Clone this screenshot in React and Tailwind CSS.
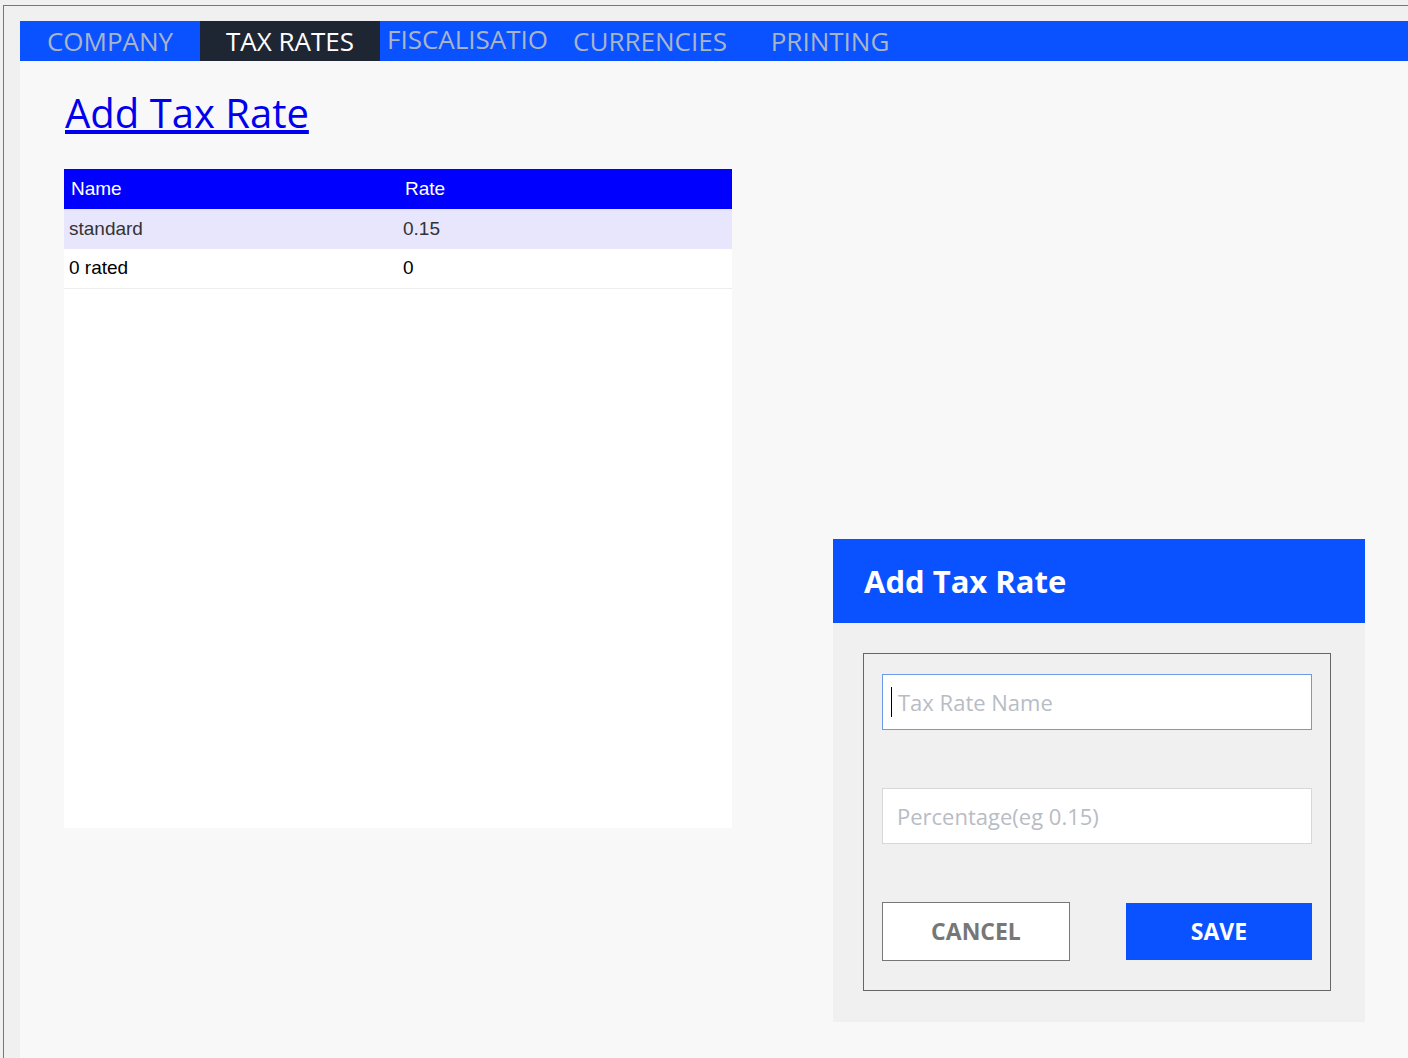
export default function App() {
  const tabs = ["COMPANY", "TAX RATES", "FISCALISATION", "CURRENCIES", "PRINTING"];
  const seg = { fontFamily: '"Open Sans", "Noto Sans", sans-serif' };
  const arial = { fontFamily: '"Liberation Sans", Arial, sans-serif' };
  return (
    <div className="w-[1408px] h-[1058px] bg-[#f0f0f0] pt-[5px] pl-[3px] overflow-hidden" style={seg}>
      <div className="h-full border-l border-t border-[#777] pt-[15px] pl-[16px]">
        <div className="h-full bg-[#f8f8f8] flex flex-col">
          <div className="h-[40px] bg-[#0a52ff] flex shrink-0">
            {tabs.map((t, i) => (
              <div
                key={t}
                className={
                  "w-[180px] h-[40px] overflow-hidden whitespace-nowrap flex items-center text-[26px] " +
                  (i === 1 ? "bg-[#1f2633] text-white justify-center" : i === 2 ? "text-[#a9b4c8] justify-start pl-[7px] pb-[3px]" : "text-[#a9b4c8] justify-center")
                }
              >
                {t === "FISCALISATION" ? "FISCALISATIO" : t}
              </div>
            ))}
          </div>
          <div className="relative flex-1">
            <a href="#" className="absolute left-[45px] top-[24px] text-[40px] leading-[56px] text-[#0000ee] underline">Add Tax Rate</a>
            <div className="absolute left-[44px] top-[108px] w-[668px] h-[659px] bg-white" style={arial}>
              <div className="flex h-[40px] bg-[#0000ff] text-white text-[19px] items-center">
                <div className="w-[334px] pl-[7px]">Name</div>
                <div className="pl-[7px]">Rate</div>
              </div>
              <div className="flex h-[40px] bg-[#e8e6fc] text-[#333] text-[19px] items-center">
                <div className="w-[334px] pl-[5px]">standard</div>
                <div className="pl-[5px]">0.15</div>
              </div>
              <div className="flex h-[40px] bg-white text-black text-[19px] items-center border-b border-[#eee]">
                <div className="w-[334px] pl-[5px]">0 rated</div>
                <div className="pl-[5px]">0</div>
              </div>
            </div>
            <div className="absolute left-[813px] top-[478px] w-[532px] h-[483px] bg-[#f0f0f0]">
              <div className="h-[84px] bg-[#0a52ff] flex items-center pl-[31px] text-white text-[31px] font-bold">Add Tax Rate</div>
              <div className="mt-[30px] ml-[30px] w-[468px] h-[338px] border border-[#666] px-[18px] pt-[20px]">
                <div className="h-[56px] bg-white border border-[#6b9be8] flex items-center pl-[8px] text-[22px] text-[#b8bcc4]">
                  <span className="w-px h-[30px] bg-black mr-[6px]"></span>Tax Rate Name
                </div>
                <div className="h-[56px] mt-[58px] bg-white border border-[#d8d8d8] flex items-center pl-[14px] text-[22px] text-[#b8bcc4]">Percentage(eg 0.15)</div>
                <div className="flex justify-between mt-[58px]">
                  <div className="w-[188px] h-[59px] bg-white border border-[#777] flex items-center justify-center text-[23px] font-bold text-[#777]">CANCEL</div>
                  <div className="w-[186px] h-[57px] mt-[1px] bg-[#0a52ff] flex items-center justify-center text-[23px] font-bold text-white">SAVE</div>
                </div>
              </div>
            </div>
          </div>
        </div>
      </div>
    </div>
  );
}
